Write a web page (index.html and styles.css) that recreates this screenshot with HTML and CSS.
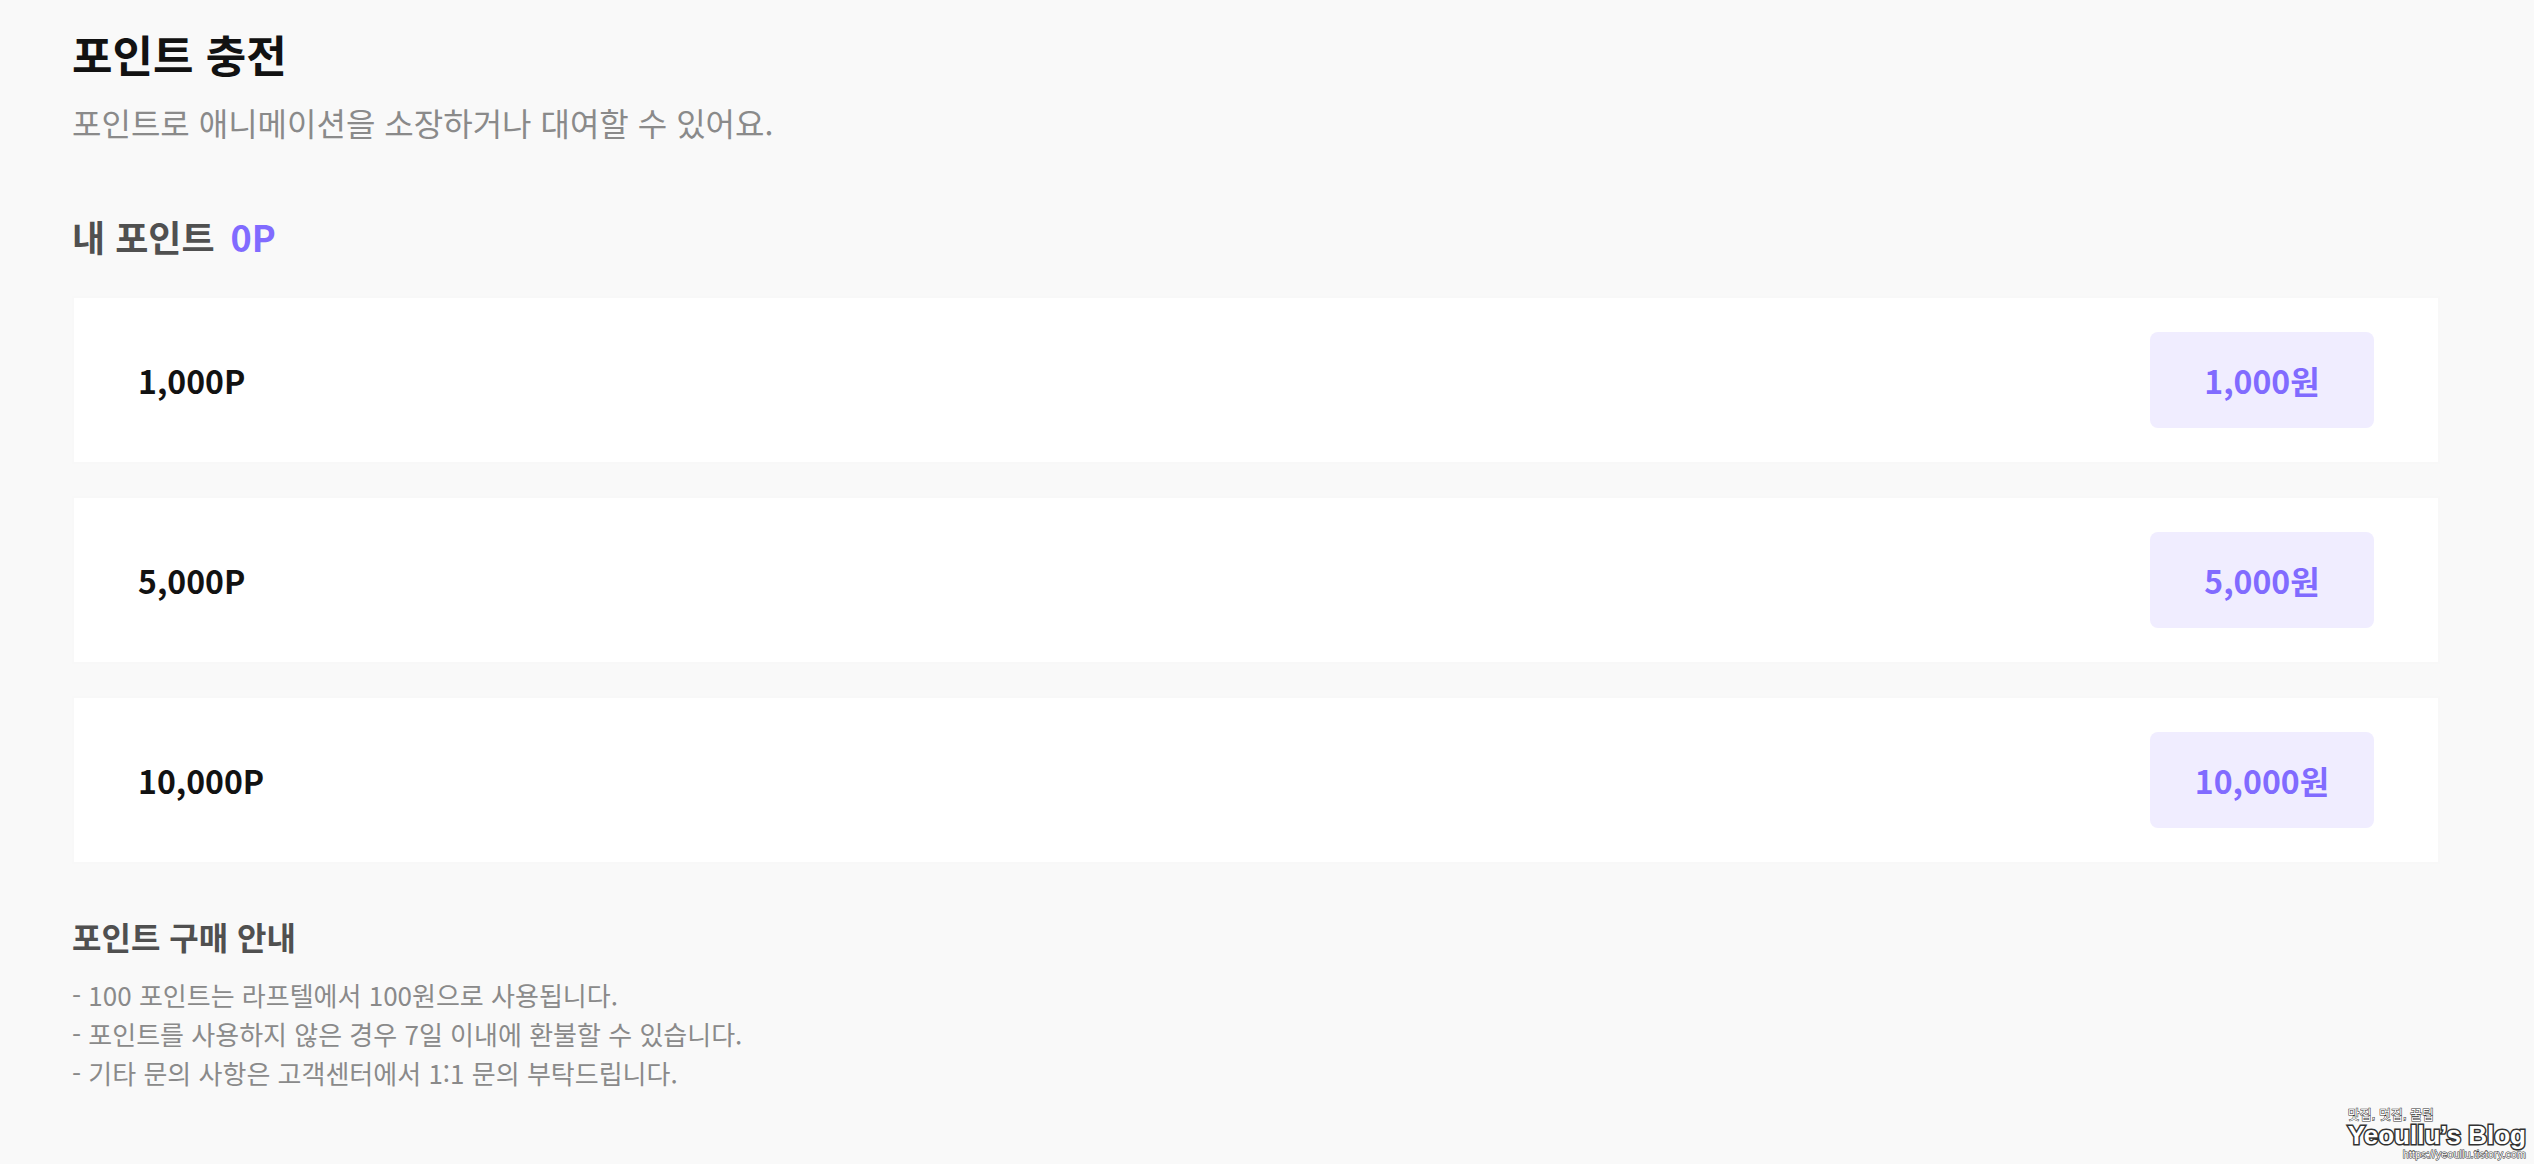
FILE: index.html
```
<!DOCTYPE html>
<html lang="ko">
<head>
    <meta charset="utf-8">
    <meta name="viewport" content="width=device-width, initial-scale=1">
    <title>포인트 충전</title>
    <link rel="stylesheet" href="styles.css">
</head>
<body>
    <main class="page">
        <h1 class="title">포인트 충전</h1>
        <p class="subtitle">포인트로 애니메이션을 소장하거나 대여할 수 있어요.</p>

        <h2 class="balance">내 포인트 <span class="balance-value">0P</span></h2>

        <ul class="product-list">
            <li class="product">
                <span class="product-name">1,000P</span>
                <button type="button" class="price-button">1,000원</button>
            </li>
            <li class="product">
                <span class="product-name">5,000P</span>
                <button type="button" class="price-button">5,000원</button>
            </li>
            <li class="product">
                <span class="product-name">10,000P</span>
                <button type="button" class="price-button">10,000원</button>
            </li>
        </ul>

        <section class="notice">
            <h3 class="notice-title">포인트 구매 안내</h3>
            <p>- 100 포인트는 라프텔에서 100원으로 사용됩니다.</p>
            <p>- 포인트를 사용하지 않은 경우 7일 이내에 환불할 수 있습니다.</p>
            <p>- 기타 문의 사항은 고객센터에서 1:1 문의 부탁드립니다.</p>
        </section>
    </main>

    <div class="signature">
        <span class="signature-tag">맛집, 멋집, 꿀팁</span>
        <span class="signature-name">Yeoullu’s Blog</span>
        <span class="signature-url">https://yeoullu.tistory.com</span>
    </div>
</body>
</html>
```

FILE: styles.css
```
* {
    box-sizing: border-box;
}

body {
    margin: 0;
    position: relative;
    min-height: 100vh;
    background-color: #f9f9f9;
    color: #121212;
    font-family: "Noto Sans CJK KR", sans-serif;
}

h1, h2, h3, p, ul {
    margin: 0;
    padding: 0;
}

.page {
    padding: 22px 94px 40px 72px;
}

.title {
    font-size: 44px;
    line-height: 64px;
}

.subtitle {
    margin-top: 12px;
    color: #8a8a8a;
    font-size: 32px;
    line-height: 48px;
}

.balance {
    display: flex;
    gap: 16px;
    margin-top: 62px;
    color: #505050;
    font-size: 36px;
    line-height: 56px;
}

.balance-value {
    color: #816bff;
}

.product-list {
    display: flex;
    flex-direction: column;
    gap: 32px;
    margin-top: 32px;
    list-style: none;
}

.product {
    display: flex;
    align-items: center;
    justify-content: space-between;
    padding: 34px 64px;
    border: 2px solid #f8f8f8;
    background-color: white;
}

.product-name {
    font-size: 32px;
    font-weight: bold;
}

.price-button {
    width: 224px;
    height: 96px;
    border: none;
    border-radius: 8px;
    background-color: #f0edff;
    color: #816bff;
    font-family: inherit;
    font-size: 32px;
    font-weight: bold;
    cursor: pointer;
}

.notice {
    margin-top: 48px;
    color: #8a8a8a;
    font-size: 26px;
    line-height: 39px;
}

.notice-title {
    margin-bottom: 15px;
    color: #505050;
    font-size: 32px;
    line-height: 48px;
}

.signature {
    position: absolute;
    right: 8px;
    bottom: 4px;
    display: flex;
    flex-direction: column;
    color: white;
    font-family: "Liberation Sans", "Noto Sans CJK KR", sans-serif;
    -webkit-text-stroke: 3px #333;
    paint-order: stroke fill;
}

.signature-tag {
    font-size: 13px;
    line-height: 14px;
    -webkit-text-stroke-width: 1px;
}

.signature-name {
    font-size: 26px;
    font-weight: bold;
    line-height: 26px;
}

.signature-url {
    align-self: flex-end;
    font-size: 11px;
    line-height: 12px;
    -webkit-text-stroke-width: 1px;
}
```
